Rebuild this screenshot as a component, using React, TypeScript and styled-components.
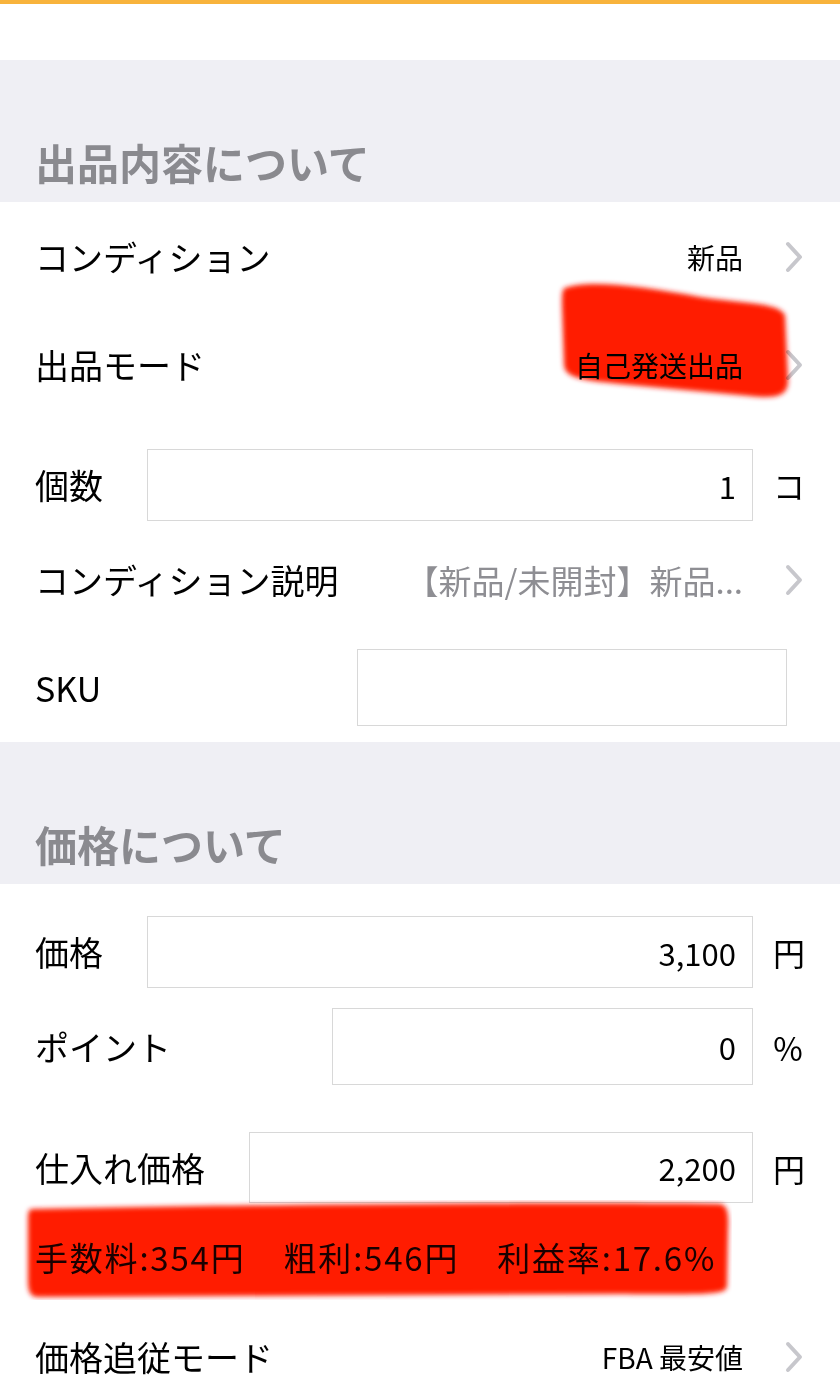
import React from 'react';
import styled, { createGlobalStyle } from 'styled-components';

const GlobalStyle = createGlobalStyle`
  body {
    margin: 0;
    background: #ffffff;
    font-family: "Noto Sans CJK JP", "Noto Sans", sans-serif;
    color: #000;
  }
`;

const Chevron: React.FC = () => (
  <ChevronWrap>
    <svg width="18" height="32" viewBox="0 0 18 32">
      <polyline
        points="3,3 15,16 3,29"
        fill="none"
        stroke="#c7c7cc"
        strokeWidth="4"
        strokeLinecap="round"
        strokeLinejoin="round"
      />
    </svg>
  </ChevronWrap>
);

type MarkProps = { d: string; w: number; h: number; left: number; top: number };

// 赤いマーカーの塗りつぶし（スクショ上の手書き）
const Marker: React.FC<MarkProps> = ({ d, w, h, left, top }) => (
  <MarkLayer $left={left} $top={top}>
    <svg width={w} height={h} viewBox={`0 0 ${w} ${h}`}>
      <defs>
        <filter id={`blur-${left}-${top}`} x="-10%" y="-20%" width="120%" height="140%">
          <feGaussianBlur stdDeviation="2.6" />
        </filter>
      </defs>
      <path d={d} fill="#ff1a00" filter={`url(#blur-${left}-${top})`} />
    </svg>
  </MarkLayer>
);

const App: React.FC = () => {
  return (
    <Page>
      <GlobalStyle />
      <TopBar />

      <SectionHeader>出品内容について</SectionHeader>
      <Section>
        <Row $h={110}>
          <Label>コンディション</Label>
          <Value>新品</Value>
          <Chevron />
        </Row>
        <Row $h={106}>
          <Label>出品モード</Label>
          <Value>自己発送出品</Value>
          <Chevron />
          <Marker
            left={550}
            top={-37}
            w={250}
            h={130}
            d="M15 13 C40 4, 95 12, 150 22 C200 29, 228 28, 235 40 L238 106 C238 121, 226 124, 200 121 L70 109 C32 105, 15 103, 14 90 L12 30 C12 20, 12 14, 15 13 Z"
          />
        </Row>
        <Row $h={72} $mt={31}>
          <Label>個数</Label>
          <Field $w={606} readOnly value="1" />
          <Unit>コ</Unit>
        </Row>
        <Row $h={118}>
          <Label>コンディション説明</Label>
          <Value $muted>【新品/未開封】新品...</Value>
          <Chevron />
        </Row>
        <Row $h={77} $mt={10} $mb={16}>
          <Label>SKU</Label>
          <Field $w={430} $mr={16} readOnly value="" />
        </Row>
      </Section>

      <SectionHeader>価格について</SectionHeader>
      <Section>
        <Row $h={72} $mt={32}>
          <Label>価格</Label>
          <Field $w={606} readOnly value="3,100" />
          <Unit>円</Unit>
        </Row>
        <Row $h={77} $mt={20}>
          <Label>ポイント</Label>
          <Field $w={421} readOnly value="0" />
          <Unit>%</Unit>
        </Row>
        <Row $h={71} $mt={47}>
          <Label>仕入れ価格</Label>
          <Field $w={504} readOnly value="2,200" />
          <Unit>円</Unit>
        </Row>
        <Row $h={109}>
          <Summary>
            <span>手数料:354円</span>
            <span>粗利:546円</span>
            <span>利益率:17.6%</span>
          </Summary>
          <Marker
            left={20}
            top={-3}
            w={712}
            h={100}
            d="M12 9 C200 5, 500 2, 700 4 C707 5, 709 12, 708 30 L707 86 C706 94, 696 95, 600 94 L18 97 C10 97, 8 91, 8 80 L8 20 C8 12, 9 9, 12 9 Z"
          />
        </Row>
        <Row $h={90}>
          <Label>価格追従モード</Label>
          <Value>FBA 最安値</Value>
          <Chevron />
        </Row>
      </Section>
    </Page>
  );
};

const Page = styled.div`
  width: 840px;
  min-height: 1400px;
  background: #ffffff;
`;

const TopBar = styled.div`
  height: 56px;
  border-top: 4px solid #f8b33c;
  background: #ffffff;
`;

const SectionHeader = styled.div`
  height: 142px;
  box-sizing: border-box;
  background: #efeff4;
  display: flex;
  align-items: flex-end;
  padding: 0 35px 19px;
  font-size: 42px;
  line-height: 1;
  font-weight: 700;
  color: #8a8a8f;
`;

const Section = styled.div`
  background: #ffffff;
  display: flex;
  flex-direction: column;
`;

const Row = styled.div<{ $h: number; $mt?: number; $mb?: number }>`
  position: relative;
  display: flex;
  align-items: center;
  box-sizing: border-box;
  height: ${(p) => p.$h}px;
  margin-top: ${(p) => p.$mt ?? 0}px;
  margin-bottom: ${(p) => p.$mb ?? 0}px;
  padding: 0 37px 0 35px;
`;

const Label = styled.div`
  flex-shrink: 0;
  font-size: 34px;
  line-height: 1;
  color: #000;
`;

const Value = styled.div<{ $muted?: boolean }>`
  margin-left: auto;
  font-size: ${(p) => (p.$muted ? 33 : 28)}px;
  line-height: 1;
  color: ${(p) => (p.$muted ? '#8e8e93' : '#000')};
  white-space: nowrap;
`;

const ChevronWrap = styled.div`
  display: flex;
  margin-left: 42px;
  width: 18px;
`;

const Field = styled.input<{ $w: number; $mr?: number }>`
  margin-left: auto;
  margin-right: ${(p) => p.$mr ?? 0}px;
  width: ${(p) => p.$w}px;
  height: 100%;
  box-sizing: border-box;
  border: 1px solid #d8d8d8;
  border-radius: 0;
  outline: none;
  background: #fff;
  padding: 0 16px 0 0;
  text-align: right;
  font-family: "Noto Sans CJK JP", "Noto Sans", sans-serif;
  font-size: 31px;
  color: #000;
`;

const Unit = styled.div`
  width: 30px;
  margin-left: 20px;
  font-size: 32px;
  line-height: 1;
  text-align: center;
  color: #000;
`;

const Summary = styled.div`
  display: flex;
  gap: 38px;
  font-size: 33px;
  letter-spacing: 1.8px;
  line-height: 1;
  color: #1a0000;
  white-space: nowrap;
`;

const MarkLayer = styled.div<{ $left: number; $top: number }>`
  position: absolute;
  left: ${(p) => p.$left}px;
  top: ${(p) => p.$top}px;
  pointer-events: none;
  mix-blend-mode: multiply;
  line-height: 0;
`;

export default App;
